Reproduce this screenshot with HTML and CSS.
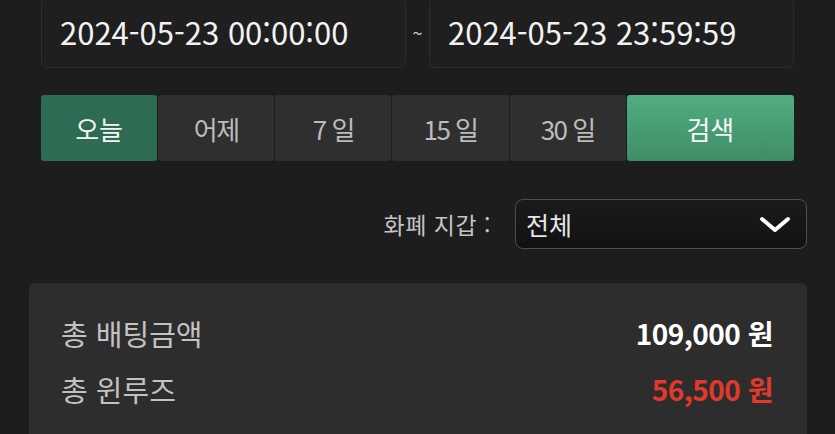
FILE: index.html
```html
<!DOCTYPE html>
<html lang="ko">
<head>
    <meta charset="UTF-8">
    <meta name="viewport" content="width=device-width, initial-scale=1.0">
    <title>베팅 내역</title>
    <link rel="stylesheet" href="styles.css">
</head>
<body>
    <div class="page">
        <!-- 기간 선택 -->
        <div class="date-range">
            <div class="date-box">2024-05-23 00:00:00</div>
            <span class="tilde">~</span>
            <div class="date-box">2024-05-23 23:59:59</div>
        </div>

        <div class="period-buttons">
            <button class="period active">오늘</button>
            <button class="period">어제</button>
            <button class="period">7 일</button>
            <button class="period">15 일</button>
            <button class="period">30 일</button>
            <button class="search">검색</button>
        </div>

        <div class="wallet-row">
            <span class="wallet-label">화폐 지갑 :</span>
            <div class="select">
                <span>전체</span>
                <svg width="34" height="20" viewBox="0 0 34 20">
                    <path d="M4 5 L17 16 L30 5" fill="none" stroke="#fff" stroke-width="4" stroke-linecap="round" stroke-linejoin="round"/>
                </svg>
            </div>
        </div>

        <div class="summary">
            <div class="summary-row">
                <span class="summary-label">총 배팅금액</span>
                <span class="summary-value">109,000 원</span>
            </div>
            <div class="summary-row">
                <span class="summary-label">총 윈루즈</span>
                <span class="summary-value loss">56,500 원</span>
            </div>
        </div>
    </div>
</body>
</html>
```

FILE: styles.css
```css
body, html {
    margin: 0;
    padding: 0;
    background: #1d1d1d;
    font-family: "Noto Sans CJK KR", "Noto Sans", sans-serif;
    overflow: hidden;
}

.page {
    margin-top: -5px;
}

.date-range {
    display: grid;
    grid-template-columns: 1fr 23px 1fr;
    align-items: center;
    padding: 0 41px;
}

.date-box {
    height: 71px;
    padding-left: 18px;
    display: flex;
    align-items: center;
    background: #1f1f1f;
    border: 1px solid #2c2c2c;
    border-radius: 6px;
    color: #f2f2f2;
    font-size: 31px;
}

.tilde {
    text-align: center;
    color: #d0d0d0;
    font-size: 18px;
}

.period-buttons {
    display: grid;
    grid-template-columns: repeat(5, 1fr) 1.44fr;
    gap: 1px;
    margin: 27px 41px 0;
}

.period-buttons button {
    height: 66px;
    border: none;
    border-radius: 3px;
    font-family: inherit;
    font-size: 26px;
    cursor: pointer;
}

.period {
    background: #2f2f2f;
    color: #bcbcbc;
    letter-spacing: -1.5px;
}

.period.active {
    background: #2e6b53;
    color: #f4f4f4;
    letter-spacing: 0;
}

.search {
    background: linear-gradient(#51ad80, #3e8d66);
    color: #f6f6f6;
}

.wallet-row {
    display: flex;
    justify-content: flex-end;
    align-items: center;
    gap: 24px;
    margin: 38px 28px 0;
}

.wallet-label {
    color: #c4c4c4;
    font-size: 23px;
    letter-spacing: 0.5px;
}

.select {
    width: 266px;
    height: 48px;
    padding: 0 14px 0 10px;
    display: flex;
    justify-content: space-between;
    align-items: center;
    background: linear-gradient(#1b1b1b, #111);
    border: 1.5px solid #4e4e4e;
    border-radius: 8px;
    color: #e6e6e6;
    font-size: 25px;
}

.summary {
    margin: 34px 28px 0 29px;
    padding: 22px 34px 30px 32px;
    background: #2d2d2d;
    border-radius: 6px;
    height: 200px;
    box-sizing: border-box;
}

.summary-row {
    display: flex;
    justify-content: space-between;
    align-items: center;
    height: 56px;
}

.summary-label {
    color: #c2c2c2;
    font-size: 29px;
}

.summary-value {
    color: #fff;
    font-size: 28px;
    font-weight: bold;
    letter-spacing: -0.5px;
}

.summary-value.loss {
    color: #e2392c;
}
```
